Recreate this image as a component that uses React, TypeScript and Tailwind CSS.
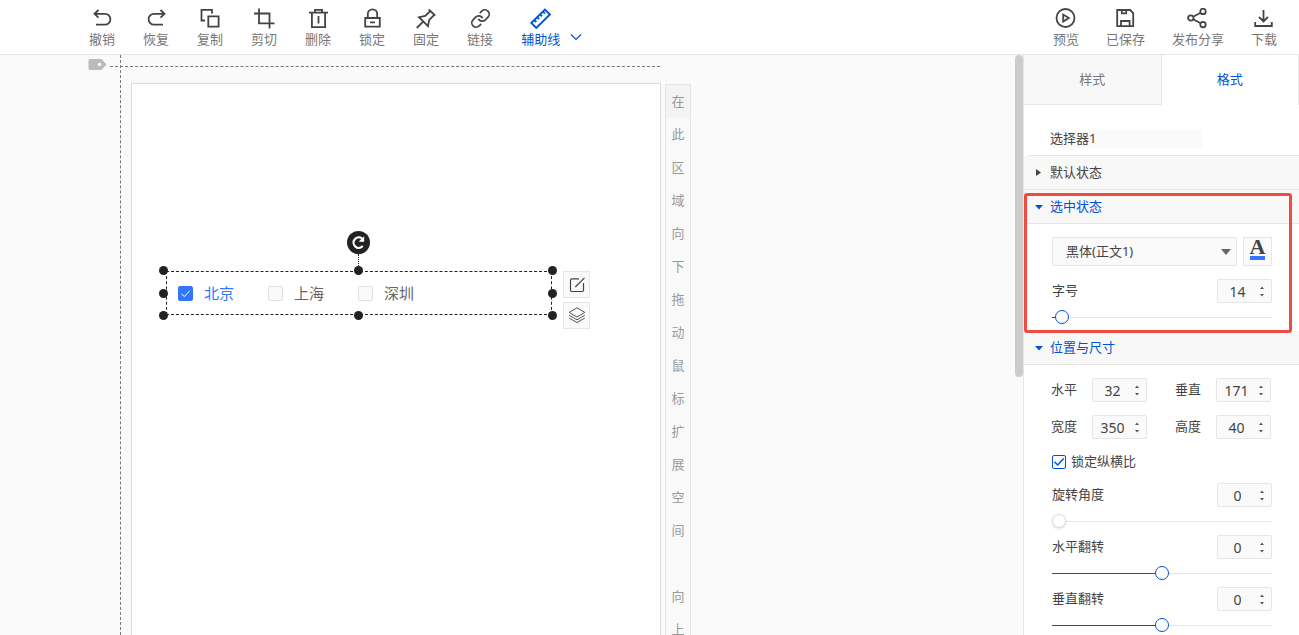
import { useState } from "react";
import type { CSSProperties, ReactNode } from "react";
import { Link } from "lucide-react";
import clsx from "clsx";

const Icon = ({ children }: { children: ReactNode }) => (
    <svg
        viewBox="0 0 21 21"
        className="size-[21px] fill-none stroke-current"
        strokeWidth="1.8"
        aria-hidden="true"
    >
        {children}
    </svg>
)

const leftTools = [
    { label: "撤销", icon: <path d="M6.5 2 2.5 5.8l4 3.8M3 5.8h10a5.3 5.3 0 0 1 0 10.8H4" /> },
    { label: "恢复", icon: <path d="m14.5 2 4 3.8-4 3.8M18 5.8H8a5.3 5.3 0 0 0 0 10.8h9" /> },
    { label: "复制", icon: <path d="M12 5.5V1.9H1.5v10.6H5M8.3 8.3h10.3v10.3H8.3z" /> },
    { label: "剪切", icon: <path d="M5 .5v14.8h15.5M0 5.5h15.5v15" /> },
    { label: "删除", icon: <path d="M1 4.6h19M7 4.4V1.9h7v2.5M3.9 4.6v14.5h13.2V4.6M10.5 8v7.5" /> },
    { label: "锁定", icon: <path d="M3.2 10h14.6v8.6H3.2zM5.8 10V6a4.7 4.7 0 0 1 9.4 0v4M8 14.3h5" /> },
    { label: "固定", icon: <path d="m12.8 1.5 6.4 6.2M14.4 3 9.2 8 3 9.2l9 9 1.2-6.2 5-5.2M7.4 13.4.8 20" /> },
]

const rightTools = [
    {
        label: "预览",
        icon: <><circle cx="10.5" cy="10" r="9" /><path d="M8.2 6.6v7l5.6-3.5z" /></>,
    },
    { label: "已保存", icon: <path d="M2.2 2h13l3 3v13.2h-16zM6.8 2v3.4h4.4V2M6 18v-5h8.6v5" /> },
    {
        label: "发布分享",
        icon: (
            <>
                <circle cx="3.8" cy="10" r="2.7" />
                <circle cx="16" cy="3.4" r="2.7" />
                <circle cx="16" cy="16.6" r="2.7" />
                <path d="m6.2 8.7 7.4-4M6.2 11.3l7.4 4" />
            </>
        ),
    },
    { label: "下载", icon: <path d="M10.5 2v11.5M6 9l4.5 4.5L15 9M2.2 14v4h16.6v-4" /> },
]

const hint = "在此区域向下拖动鼠标扩展空间 向上"

function Tool({ label, children, active }: { label: string; children: ReactNode; active?: boolean }) {
    return (
        <button className={clsx("flex flex-col items-center", active ? "text-[#0052d9]" : "text-[#444]")}>
            {children}
            <span className={clsx("text-[13px] leading-5", !active && "text-[#777]")}>{label}</span>
        </button>
    )
}

function Caret({ open }: { open?: boolean }) {
    return (
        <svg viewBox="0 0 8 8" className="size-2 fill-current" aria-hidden="true">
            <path d={open ? "M0 2h8L4 6.5z" : "M1 0v7l5-3.5z"} />
        </svg>
    )
}

function SectionHead({ title, open }: { title: string; open?: boolean }) {
    return (
        <button
            aria-expanded={!!open}
            className={clsx(
                "flex h-[34px] w-full items-center gap-[7px] border-b border-[#e6e6e6] bg-[#f8f8f8] pl-[11px] text-[13px]",
                open ? "text-[#0052d9]" : "text-[#444]"
            )}
        >
            <Caret open={open} />
            {title}
        </button>
    )
}

function Spinner({ id, value, onChange }: { id: string; value: number; onChange: (v: number) => void }) {
    return (
        <div className="flex h-6 w-[55px] rounded-xs border border-[#e6e6e6] bg-[#fafafa]">
            <input
                id={id}
                type="number"
                value={value}
                onChange={(e) => onChange(Number(e.target.value))}
                className="w-[41px] appearance-none pt-px pr-0.5 text-center text-sm text-[#444] outline-none [-moz-appearance:textfield] [&::-webkit-inner-spin-button]:appearance-none"
            />
            <div className="flex flex-col justify-center gap-[5px]">
                <button aria-label="增加" onClick={() => onChange(value + 1)}>
                    <svg viewBox="0 0 6 3" className="h-[3px] w-1.5 fill-[#555]"><path d="M1 3h4L3 .5z" /></svg>
                </button>
                <button aria-label="减少" onClick={() => onChange(value - 1)}>
                    <svg viewBox="0 0 6 3" className="h-[3px] w-1.5 fill-[#555]"><path d="M1 0h4L3 2.5z" /></svg>
                </button>
            </div>
        </div>
    )
}

function NumberField({ id, label, initial }: { id: string; label: string; initial: number }) {
    const [value, setValue] = useState(initial);
    return (
        <div className="flex items-center gap-[15px]">
            <label htmlFor={id}>{label}</label>
            <Spinner id={id} value={value} onChange={setValue} />
        </div>
    )
}

type SliderProps = { id: string; label: string; initial: number; min: number; max: number }

function SliderField({ id, label, initial, min, max }: SliderProps) {
    const [value, setValue] = useState(initial);
    const fill = ((value - min) / (max - min)) * 100;
    return (
        <div className="flex flex-col gap-[7px]">
            <div className="flex items-center justify-between">
                <label htmlFor={id}>{label}</label>
                <Spinner id={id} value={value} onChange={setValue} />
            </div>
            <input
                type="range"
                aria-label={label}
                min={min}
                max={max}
                value={value}
                onChange={(e) => setValue(Number(e.target.value))}
                style={{ "--fill": `${fill}%` } as CSSProperties}
                className={clsx(
                    "h-3.5 w-full appearance-none bg-[linear-gradient(to_right,#0052d9_var(--fill),#e6e6e6_var(--fill))] bg-[length:100%_1px] bg-[position:0_7px] bg-no-repeat",
                    "[&::-webkit-slider-thumb]:size-3.5 [&::-webkit-slider-thumb]:appearance-none [&::-webkit-slider-thumb]:rounded-full [&::-webkit-slider-thumb]:border [&::-webkit-slider-thumb]:bg-white",
                    value === min
                        ? "[&::-webkit-slider-thumb]:border-[#ddd] [&::-webkit-slider-thumb]:shadow-sm"
                        : "[&::-webkit-slider-thumb]:border-[#0052d9]"
                )}
            />
        </div>
    )
}

function Option({ label, defaultChecked }: { label: string; defaultChecked?: boolean }) {
    return (
        <label className="flex items-center gap-[11px] text-[15px] text-[#666] has-checked:text-[#3076ff]">
            <span className="grid">
                <input
                    type="checkbox"
                    defaultChecked={defaultChecked}
                    className="peer col-start-1 row-start-1 size-[15px] appearance-none rounded-xs border border-[#e0e0e0] bg-[#fafafa] checked:border-[#3076ff] checked:bg-[#3076ff]"
                />
                <svg
                    viewBox="0 0 15 15"
                    className="pointer-events-none col-start-1 row-start-1 hidden size-[15px] fill-none stroke-white peer-checked:block"
                >
                    <path d="m3.5 7.8 2.8 2.8 5.5-6" />
                </svg>
            </span>
            {label}
        </label>
    )
}

// resize handles around the selected component
const handles = [
    "-left-2 -top-1.5",
    "left-[187px] -top-1.5",
    "-right-1.5 -top-1.5",
    "-left-2 top-[17px]",
    "-right-1.5 top-[17px]",
    "-left-2 -bottom-1.5",
    "left-[187px] -bottom-1.5",
    "-right-1.5 -bottom-1.5",
]

function SelectedBlock() {
    return (
        <div className="absolute top-[187px] left-[34px] flex h-11 w-[386px] items-center gap-[34px] border border-dashed border-[#222] pl-[11px]">
            <Option label="北京" defaultChecked />
            <Option label="上海" />
            <Option label="深圳" />
            {handles.map((pos) => (
                <i key={pos} className={clsx("absolute size-[9px] rounded-full bg-[#222]", pos)} />
            ))}
            <button
                aria-label="旋转"
                className="absolute -top-[41px] left-[180px] flex size-[23px] items-center justify-center rounded-full bg-[#222]"
            >
                <svg viewBox="0 0 23 23" className="size-[23px] fill-none stroke-white" strokeWidth="2.2">
                    <path d="M15.7 15a5.2 5.2 0 1 1-.6-7.4" />
                    <path d="M17.2 5.2v5.6h-5.6z" className="fill-white stroke-none" />
                </svg>
            </button>
            <i className="absolute -top-[18px] left-[191px] h-3 border-l border-dotted border-[#222]" />
            <div className="absolute -top-px left-[396px] flex flex-col gap-1">
                <button aria-label="编辑" className="flex size-[27px] items-center justify-center border border-[#e6e6e6] bg-[#fafafa] text-[#444]">
                    <svg viewBox="0 0 16 16" className="size-4 fill-none stroke-current" strokeWidth="1.2">
                        <path d="M10 1.8H2.7A1.2 1.2 0 0 0 1.5 3v10.3a1.2 1.2 0 0 0 1.2 1.2h10.6a1.2 1.2 0 0 0 1.2-1.2V6M6.3 10 15.5.8" />
                    </svg>
                </button>
                <button aria-label="图层" className="flex size-[27px] items-center justify-center border border-[#e6e6e6] bg-[#fafafa] text-[#555]">
                    <svg viewBox="0 0 18 18" className="size-[18px] fill-none stroke-current">
                        <path d="m9 .8 7.8 4.6L9 10 1.2 5.4zM1.2 8.2 9 12.8l7.8-4.6M1.2 11 9 15.6l7.8-4.6" />
                    </svg>
                </button>
            </div>
        </div>
    )
}

function Header() {
    return (
        <header className="flex h-[55px] shrink-0 justify-between border-b border-[#e6e6e6] bg-white pt-2 pr-[22px] pl-[89px]">
            <div className="flex items-start gap-7">
                {leftTools.map((t) => (
                    <Tool key={t.label} label={t.label}>
                        <Icon>{t.icon}</Icon>
                    </Tool>
                ))}
                <Tool label="链接">
                    <Link className="size-[21px]" strokeWidth={2} />
                </Tool>
                <div className="flex items-end gap-2.5 text-[#0052d9]">
                    <Tool label="辅助线" active>
                        <Icon>
                            <path d="M1.3 15 14.9 1.5l5 5L6.3 20zM4.3 12l2 2M7.2 9.2l2 2M10 6.3l2 2M12.9 3.6l2 2" />
                        </Icon>
                    </Tool>
                    <button aria-label="更多" className="flex h-5 items-start pt-1">
                        <svg viewBox="0 0 12 8" className="h-2 w-3 fill-none stroke-[#0052d9]" strokeWidth="1.2"><path d="m1 1.5 5 5 5-5" /></svg>
                    </button>
                </div>
            </div>
            <div className="flex items-start gap-[27px]">
                {rightTools.map((t) => (
                    <Tool key={t.label} label={t.label}>
                        <Icon>{t.icon}</Icon>
                    </Tool>
                ))}
            </div>
        </header>
    )
}

function Workspace() {
    return (
        <main className="relative flex flex-1 gap-1 overflow-hidden bg-[#fafafa] pt-7 pl-[131px]">
            {/* guide lines */}
            <i className="absolute inset-y-0 left-[120px] border-l border-dashed border-[#777]" />
            <i className="absolute top-[11px] left-[110px] w-[550px] border-t border-dashed border-[#777]" />
            <svg viewBox="0 0 19 11" className="absolute top-1 left-[88px] h-[11px] w-[19px]">
                <path d="M2 0h11.5L18.5 5.5l-5 5.5H2a1.5 1.5 0 0 1-1.5-1.5v-8A1.5 1.5 0 0 1 2 0z" fill="#bbb" />
                <circle cx="11.5" cy="5.5" r="1.7" fill="#fff" />
            </svg>
            <section className="relative w-[530px] shrink-0 border border-b-0 border-[#dcdcdc] bg-white">
                <SelectedBlock />
            </section>
            <div className="mt-px w-[26px] shrink-0 border border-b-0 border-[#e6e6e6] bg-[#f9f9f9] text-center text-[13px] text-[#999]">
                {[...hint].map((ch, i) => (
                    <div key={i} className="h-[33px] leading-[33px] first:bg-[#f3f3f3]">{ch}</div>
                ))}
            </div>
        </main>
    )
}

function Panel() {
    return (
        <aside className="w-[276px] shrink-0 overflow-hidden border-l border-[#e6e6e6] bg-white text-[13px] text-[#444]">
            <div role="tablist" className="flex h-[50px]">
                <button role="tab" aria-selected="false" className="flex-1 border-r border-b border-[#e6e6e6] bg-[#f8f8f8] text-[#777]">样式</button>
                <button role="tab" aria-selected="true" className="flex-1 border-r border-[#e6e6e6] text-[#0052d9]">格式</button>
            </div>
            <div className="ml-1 border-b border-[#e6e6e6] pt-[25px] pb-[7px] pl-[22px]">
                <input aria-label="组件名称" defaultValue="选择器1" className="block h-[18px] w-[152px] bg-[#fafafa] outline-none" />
            </div>
            <SectionHead title="默认状态" />
            <div className="relative">
                <SectionHead title="选中状态" open />
                <div className="flex flex-col gap-[13px] pt-[13px] pr-[27px] pb-[7px] pl-7">
                    <div className="flex gap-1.5">
                        <div className="grid flex-1 items-center">
                            <select
                                aria-label="字体"
                                className="col-start-1 row-start-1 h-[29px] w-full appearance-none rounded-xs border border-[#e6e6e6] bg-[#fafafa] pl-[13px]"
                            >
                                <option>黑体(正文1)</option>
                            </select>
                            <svg viewBox="0 0 10 6" className="pointer-events-none col-start-1 row-start-1 mr-1.5 h-1.5 w-2.5 justify-self-end fill-[#666]">
                                <path d="M0 0h10L5 6z" />
                            </svg>
                        </div>
                        <button
                            aria-label="字体颜色"
                            className="flex size-[29px] flex-col items-center border border-[#e6e6e6] bg-[#fafafa] font-['Liberation_Serif',serif] text-[22px] leading-[18px] font-bold"
                        >
                            A
                            <i className="h-1 w-[15px] bg-[#3076ff]" />
                        </button>
                    </div>
                    <SliderField id="size" label="字号" initial={14} min={12} max={150} />
                </div>
                <i className="pointer-events-none absolute top-[3px] right-[7px] -bottom-0.5 left-0 z-10 rounded-[3px] border-3 border-[#f04b40]" />
            </div>
            <SectionHead title="位置与尺寸" open />
            <div className="flex flex-col gap-[13px] pt-[13px] pr-7 pl-[27px]">
                <div className="flex justify-between">
                    <NumberField id="x" label="水平" initial={32} />
                    <NumberField id="y" label="垂直" initial={171} />
                </div>
                <div className="flex justify-between">
                    <NumberField id="w" label="宽度" initial={350} />
                    <NumberField id="h" label="高度" initial={40} />
                </div>
                <label className="flex h-5 items-center gap-[5px] pl-px">
                    <span className="grid">
                        <input
                            type="checkbox"
                            defaultChecked
                            className="peer col-start-1 row-start-1 size-3.5 appearance-none rounded-xs border border-[#0052d9]"
                        />
                        <svg
                            viewBox="0 0 14 14"
                            className="pointer-events-none col-start-1 row-start-1 hidden size-3.5 fill-none stroke-[#0052d9] peer-checked:block"
                            strokeWidth="1.5"
                        >
                            <path d="m2.5 6.8 3.2 3.2 6-6.5" />
                        </svg>
                    </span>
                    锁定纵横比
                </label>
            </div>
            <div className="flex flex-col gap-[7px] pt-[11px] pr-[27px] pl-7">
                <SliderField id="rotate" label="旋转角度" initial={0} min={0} max={360} />
                <SliderField id="flip-x" label="水平翻转" initial={0} min={-180} max={180} />
                <SliderField id="flip-y" label="垂直翻转" initial={0} min={-180} max={180} />
            </div>
        </aside>
    )
}

export default function App() {
    return (
        <div className="flex h-screen flex-col overflow-hidden font-['Noto_Sans','Noto_Sans_CJK_SC',sans-serif]">
            <Header />
            <div className="flex min-h-0 flex-1">
                <Workspace />
                <div className="w-2 shrink-0 bg-[#fafafa]">
                    <div className="h-5/9 rounded-full bg-[#ccc]" />
                </div>
                <Panel />
            </div>
        </div>
    )
}
